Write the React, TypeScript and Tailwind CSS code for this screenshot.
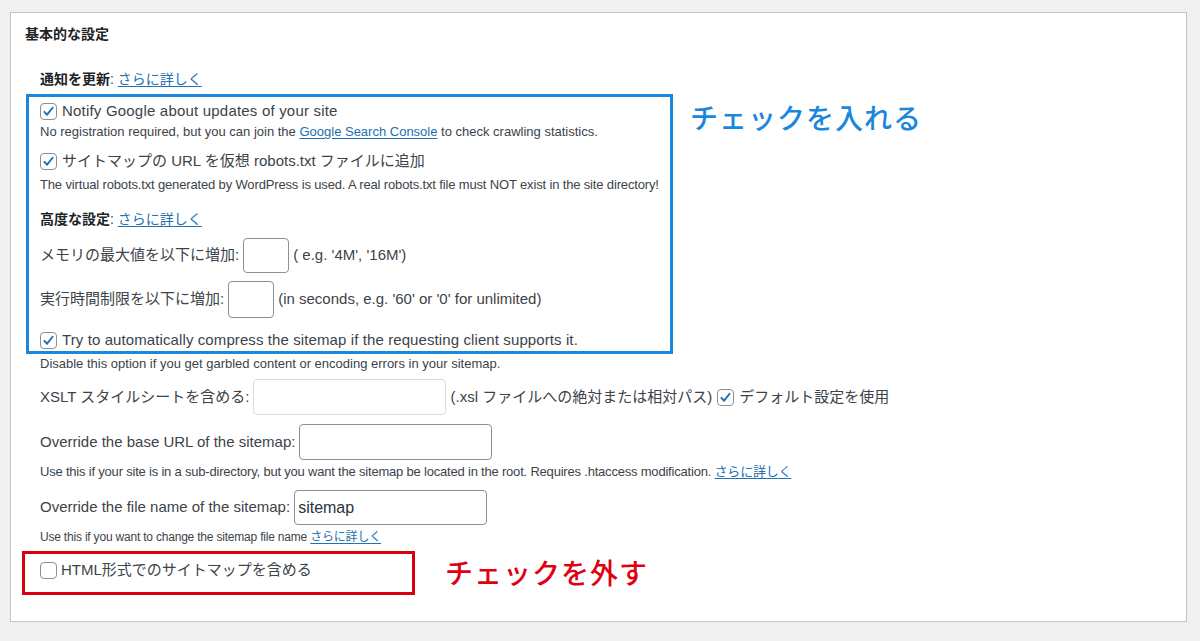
const font = { fontFamily: '"Liberation Sans", "Noto Sans CJK JP", sans-serif' };

function Check({ checked = true }: { checked?: boolean }) {
  return (
    <span className="inline-flex h-[17px] w-[17px] shrink-0 items-center justify-center rounded-[4px] border border-[#8c8f94] bg-white">
      {checked && (
        <svg viewBox="0 0 20 20" className="h-[15px] w-[15px]">
          <path d="M4.5 10.5l3.6 3.8L15.5 5" fill="none" stroke="#2271b1" strokeWidth="2.6" strokeLinecap="round" strokeLinejoin="round" />
        </svg>
      )}
    </span>
  );
}

function Link({ children }: { children: React.ReactNode }) {
  return <a className="text-[#2271b1] underline underline-offset-2">{children}</a>;
}

function Box({ w, h, light, value }: { w: string; h: string; light?: boolean; value?: string }) {
  return (
    <span
      className={`${w} ${h} mx-[4px] inline-flex items-center rounded-[4px] border bg-white px-[3px] text-[16px] text-[#2c3338] ${
        light ? 'border-[#dcdcde]' : 'border-[#8c8f94]'
      }`}
    >
      {value}
    </span>
  );
}

export default function App() {
  return (
    <div style={font} className="h-[641px] w-[1200px] bg-[#f0f0f1] pl-[10px] pr-[13px] pt-[12px]">
      <div className="h-[610px] border border-[#c3c4c7] bg-white px-[11px] text-[#3c434a]">
        <h2 className="ml-[3px] mt-[11px] text-[14px] font-bold leading-[20px] text-[#1d2327]">基本的な設定</h2>

        <div className="ml-[18px] mt-[25px] text-[14px] leading-[20px]">
          <b className="text-[#1d2327]">通知を更新</b>: <Link>さらに詳しく</Link>
        </div>

        <div className="ml-[4px] mt-[5px] flex items-start">
          <div className="h-[260px] w-[647px] shrink-0 border-[3px] border-[#1b87dc] pl-[11px] pt-[3px]">
            <label className="flex h-[22px] items-center gap-[5px] text-[15px] tracking-[0.2px]">
              <Check />
              Notify Google about updates of your site
            </label>
            <p className="mt-[2px] whitespace-nowrap text-[13px] leading-[16px]">
              No registration required, but you can join the <Link>Google Search Console</Link> to check crawling statistics.
            </p>
            <label className="mt-[10px] flex h-[22px] items-center gap-[5px] text-[15px]">
              <Check />
              サイトマップの URL を仮想 robots.txt ファイルに追加
            </label>
            <p className="mt-[5px] whitespace-nowrap text-[13px] leading-[16px] tracking-[-0.15px]">
              The virtual robots.txt generated by WordPress is used. A real robots.txt file must NOT exist in the site directory!
            </p>
            <div className="mt-[16px] text-[14px] leading-[20px]">
              <b className="text-[#1d2327]">高度な設定</b>: <Link>さらに詳しく</Link>
            </div>
            <div className="mt-[9px] flex items-center text-[15px]">
              メモリの最大値を以下に増加:
              <Box w="w-[46px]" h="h-[35px]" />
              ( e.g. '4M', '16M')
            </div>
            <div className="mt-[8px] flex items-center text-[15px]">
              実行時間制限を以下に増加:
              <Box w="w-[46px]" h="h-[37px]" />
              (in seconds, e.g. '60' or '0' for unlimited)
            </div>
            <label className="mt-[11px] flex h-[22px] items-center gap-[5px] text-[15px] tracking-[0.1px]">
              <Check />
              Try to automatically compress the sitemap if the requesting client supports it.
            </label>
          </div>
          <div className="ml-[17px] mt-[8px] whitespace-nowrap text-[28px] font-medium leading-[36px] tracking-[1px] text-[#1b87dc]">
            チェックを入れる
          </div>
        </div>

        <div className="ml-[18px]">
          <p className="mt-[2px] whitespace-nowrap text-[13px] leading-[16px]">
            Disable this option if you get garbled content or encoding errors in your sitemap.
          </p>
          <div className="mt-[7px] flex items-center whitespace-nowrap text-[15px]">
            XSLT スタイルシートを含める:
            <Box w="w-[193px]" h="h-[36px]" light />
            (.xsl ファイルへの絶対または相対パス)
            <span className="ml-[5px] mr-[5px] inline-flex">
              <Check />
            </span>
            デフォルト設定を使用
          </div>
          <div className="mt-[9px] flex items-center text-[15px]">
            Override the base URL of the sitemap:
            <Box w="w-[193px]" h="h-[36px]" />
          </div>
          <p className="mt-[4px] whitespace-nowrap text-[13px] leading-[16px] tracking-[-0.2px]">
            Use this if your site is in a sub-directory, but you want the sitemap be located in the root. Requires .htaccess modification.{' '}
            <Link>さらに詳しく</Link>
          </p>
          <div className="mt-[10px] flex items-center text-[15px]">
            Override the file name of the sitemap:
            <Box w="w-[193px]" h="h-[35px]" value="sitemap" />
          </div>
          <p className="mt-[4px] whitespace-nowrap text-[12px] leading-[16px] tracking-[-0.2px]">
            Use this if you want to change the sitemap file name <Link>さらに詳しく</Link>
          </p>
        </div>

        <div className="mt-[6px] flex items-center">
          <div className="h-[44px] w-[393px] shrink-0 border-[3px] border-[#d9000d] pl-[15px] pt-[5px]">
            <label className="flex h-[22px] items-center gap-[4px] text-[15px]">
              <Check checked={false} />
              HTML形式でのサイトマップを含める
            </label>
          </div>
          <div className="ml-[30px] mt-[4px] whitespace-nowrap text-[28px] font-medium leading-[36px] tracking-[1px] text-[#e0000f]">
            チェックを外す
          </div>
        </div>
      </div>
    </div>
  );
}
